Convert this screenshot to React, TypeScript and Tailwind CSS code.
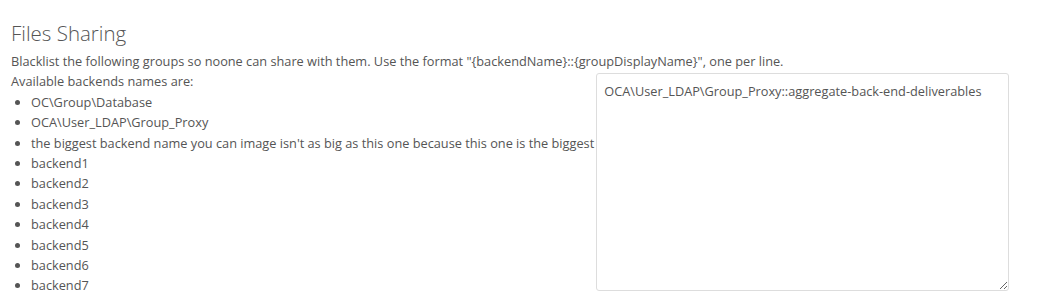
export default function App() {
  const backends = [
    "OC\\Group\\Database",
    "OCA\\User_LDAP\\Group_Proxy",
    "the biggest backend name you can image isn't as big as this one because this one is the biggest",
    "backend1",
    "backend2",
    "backend3",
    "backend4",
    "backend5",
    "backend6",
    "backend7",
  ];

  return (
    <div className="min-h-screen bg-white px-[11px] pt-[18px] text-[12.75px] leading-[20.4px] text-[#555] [font-family:'Open_Sans',sans-serif]">
      <h2 className="mb-[3px] text-[20.5px] font-light leading-[30px] text-[#555]">Files Sharing</h2>
      <p>
        Blacklist the following groups so noone can share with them. Use the format
        "&#123;backendName&#125;::&#123;groupDisplayName&#125;", one per line.
      </p>
      <div className="flex items-start gap-[2px]">
        <div>
          <p>Available backends names are:</p>
          <ul className="list-disc pl-[20px]">
            {backends.map((b) => (
              <li key={b}>{b}</li>
            ))}
          </ul>
        </div>
        <textarea
          className="mt-[2px] h-[218px] w-[413px] rounded-[3px] border border-[#ddd] px-[7px] py-[7px] text-[12.75px] leading-[20px] text-[#555] outline-none"
          defaultValue={"OCA\\User_LDAP\\Group_Proxy::aggregate-back-end-deliverables"}
        />
      </div>
    </div>
  );
}
